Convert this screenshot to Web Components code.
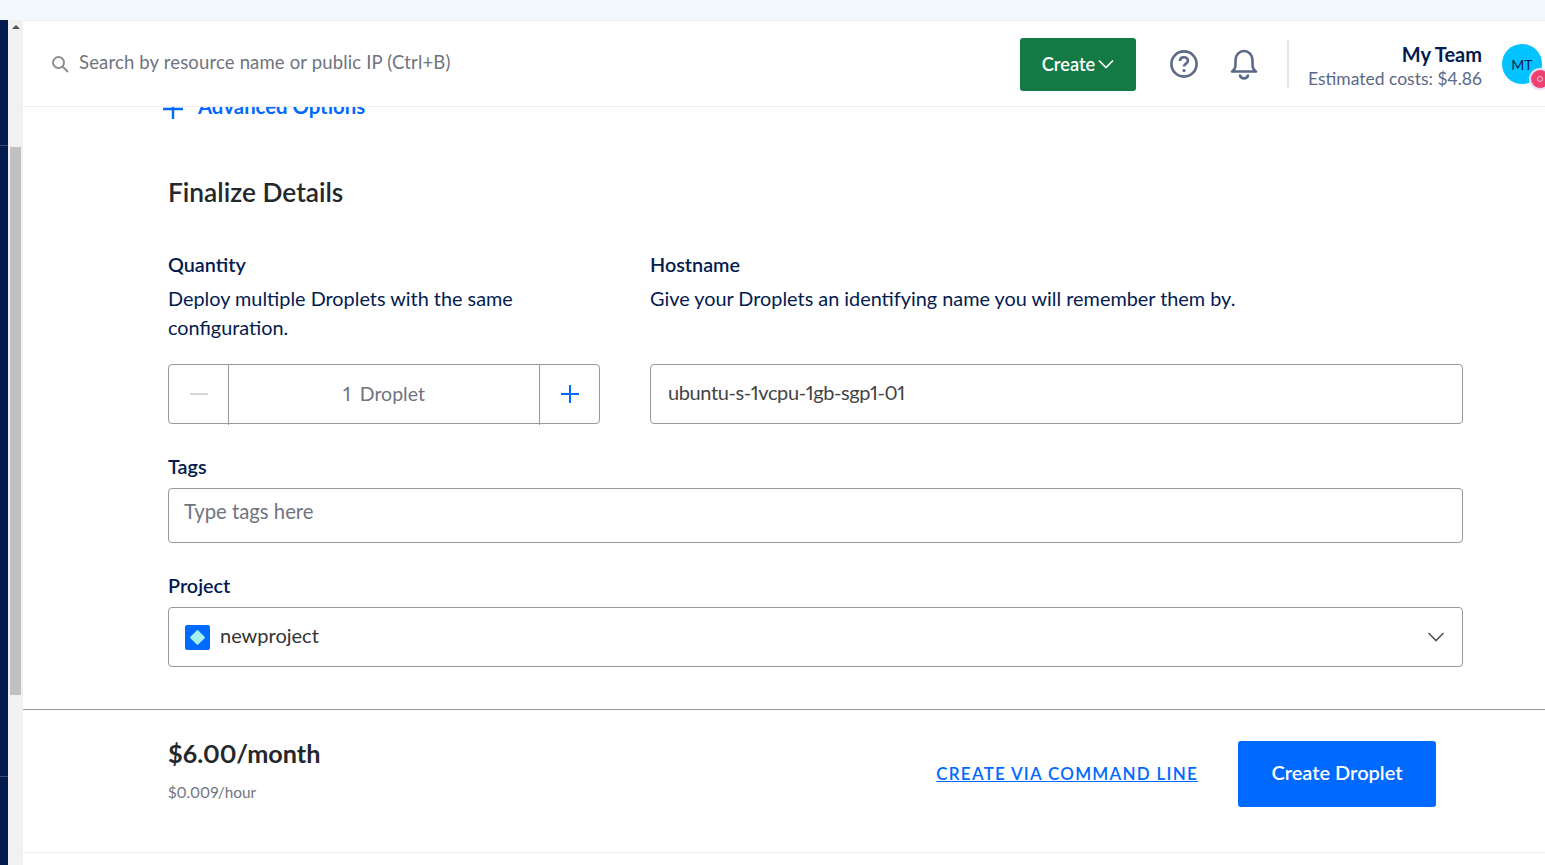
<!DOCTYPE html>
<html lang="en">
<head>
<meta charset="utf-8">
<title>Create Droplet</title>
<style>
    html, body { margin: 0; height: 100%; background: #fff; overflow: hidden; }
    body { font-family: 'Lato', 'Open Sans', sans-serif; color: #031b4e; font-variant-numeric: proportional-nums; }
</style>
</head>
<body>
<app-shell>
    <top-bar slot="header"></top-bar>
    <advanced-link></advanced-link>
    <section-title>Finalize Details</section-title>
    <details-form></details-form>
    <price-bar slot="footer"></price-bar>
</app-shell>

<script>
class AppShell extends HTMLElement {
    constructor() {
        super();
        this.attachShadow({ mode: 'open' });
        this.shadowRoot.innerHTML = `
            <style>
                :host { display: flex; flex-direction: column; width: 1545px; height: 865px; overflow: hidden; }
                .strip { height: 20px; flex: none; background: #f3f8ff; }
                .row { display: flex; flex: 1; min-height: 0; }
                .nav { width: 8px; flex: none; background: #031b4e; display: flex; flex-direction: column; }
                .nav i { display: block; height: 1px; background: #3a4b72; }
                .nav .a { height: 125px; }
                .nav .b { height: 630px; }
                .track { width: 15px; flex: none; background: #f1f1f1; display: flex; flex-direction: column; align-items: center; }
                .arrow { width: 0; height: 0; margin-top: 5px; border-left: 4px solid transparent; border-right: 4px solid transparent; border-bottom: 4px solid #505050; }
                .thumb { width: 11px; height: 548px; margin-top: 118px; background: #c1c1c1; }
                .main { flex: 1; min-width: 0; display: flex; flex-direction: column; }
                .body { padding: 0 82px 0 145px; }
            </style>
            <div class="strip"></div>
            <div class="row">
                <div class="nav"><div class="a"></div><i></i><div class="b"></div><i></i></div>
                <div class="track"><div class="arrow"></div><div class="thumb"></div></div>
                <div class="main">
                    <slot name="header"></slot>
                    <div class="body"><slot></slot></div>
                    <slot name="footer"></slot>
                </div>
            </div>
        `;
    }
}

class TopBar extends HTMLElement {
    constructor() {
        super();
        this.attachShadow({ mode: 'open' });
        this.shadowRoot.innerHTML = `
            <style>
                :host { display: flex; align-items: center; position: relative; z-index: 2; height: 85px; box-sizing: content-box;
                    background: #fff; border-top: 1px solid #e9ebef; border-bottom: 1px solid #eceef1; padding-left: 28px; }
                .search { display: flex; align-items: center; gap: 10px; flex: 1; font-size: 18.5px; letter-spacing: .16px; color: #6f7480; margin-top: -3px; }
                .search svg { margin-top: 4px; }
                .create { width: 116px; height: 53px; margin-top: 1px; box-sizing: border-box; background: #137a45; border-radius: 3px; color: #fff; font-size: 18.2px; font-weight: 600;
                    display: flex; align-items: center; justify-content: center; gap: 3px; }
                .icons { display: flex; align-items: center; gap: 30px; margin: 1px 28px 0 33px; }
                .sep { width: 2px; height: 48px; background: #e6e8ec; margin-top: 1px; }
                .team { display: flex; flex-direction: column; align-items: flex-end; padding-top: 5px; margin-left: 21px; width: 172px; white-space: nowrap; }
                .team b { display: block; font-size: 20px; line-height: 24px; margin-bottom: 1px; color: #031b4e; font-weight: 700; }
                .team span { display: block; font-size: 17.5px; line-height: 24px; color: #5b6987; }
                .avatar { position: relative; width: 40px; height: 40px; margin: 1px 3px 0 20px; border-radius: 50%; background: #00c3ff;
                    display: flex; align-items: center; justify-content: center; font-size: 14px; color: #031b4e; }
                .badge { position: absolute; left: 27px; top: 24px; width: 22px; height: 22px; box-sizing: border-box; border-radius: 50%; background: #f0406f; border: 2px solid #ecdcf7;
                    display: flex; align-items: center; justify-content: center; }
                .badge::after { content: ""; width: 4px; height: 4px; border-radius: 50%; border: 1.5px solid #f9c6dd; }
            </style>
            <div class="search">
                <svg width="18" height="18" viewBox="0 0 18 18" fill="none" stroke="#8e8e8e" stroke-width="2"><circle cx="7.5" cy="7.5" r="5.5"/><path d="M11.500 11.500L17 17"/></svg>
                <span>Search by resource name or public IP (Ctrl+B)</span>
            </div>
            <div class="create">Create
                <svg width="16" height="10" viewBox="0 0 16 10" fill="none" stroke="#fff" stroke-width="1.600"><path d="M1 1.500L8 8.500L15 1.500"/></svg>
            </div>
            <div class="icons">
                <svg width="30" height="30" viewBox="0 0 30 30" fill="none" stroke="#5b6987" stroke-width="2.600"><circle cx="15" cy="15" r="12.600"/><path d="M11 12c0-2.400 1.800-3.800 4-3.800s4 1.400 4 3.400c0 3-4 3-4 6" stroke-width="2.600"/><circle cx="15" cy="21.500" r="1.600" fill="#5b6987" stroke="none"/></svg>
                <svg width="30" height="32" viewBox="0 0 30 32" fill="none" stroke="#5b6987" stroke-width="2.600" stroke-linejoin="round"><path d="M3 23.500c2.500-1.500 3.500-3.500 3.500-7V12a8.500 9 0 0 1 17 0v4.500c0 3.500 1 5.500 3.500 7z"/><path d="M11 27.500a4.200 4.200 0 0 0 8 0" stroke-linecap="round"/></svg>
            </div>
            <div class="sep"></div>
            <div class="team"><b>My Team</b><span>Estimated costs: $4.86</span></div>
            <div class="avatar">MT<div class="badge"></div></div>
        `;
    }
}

class AdvancedLink extends HTMLElement {
    constructor() {
        super();
        this.attachShadow({ mode: 'open' });
        this.shadowRoot.innerHTML = `
            <style>
                :host { display: flex; align-items: center; gap: 15px; height: 24px; margin: -13px 0 0 -5px; font-size: 20.3px; font-weight: 700; color: #0069ff; }
                svg { margin-top: 6px; }
            </style>
            <svg width="20" height="20" viewBox="0 0 20 20" stroke="#0069ff" stroke-width="2.400"><path d="M10 0V20M0 10H20"/></svg>
            <span>Advanced Options</span>
        `;
    }
}

class SectionTitle extends HTMLElement {
    constructor() {
        super();
        this.attachShadow({ mode: 'open' });
        this.shadowRoot.innerHTML = `
            <style>
                :host { display: block; margin-top: 57px; font-size: 26.3px; line-height: 34px; font-weight: 600; color: #24272b; }
            </style>
            <slot></slot>
        `;
    }
}

class FormField extends HTMLElement {
    constructor() {
        super();
        this.attachShadow({ mode: 'open' });
        const label = this.getAttribute('label');
        const hint = this.getAttribute('hint');
        this.shadowRoot.innerHTML = `
            <style>
                :host { display: block; }
                h3 { margin: 0 0 var(--label-gap, 0); font-size: 19.8px; line-height: 29px; font-weight: 600; color: #031b4e; }
                p { margin: 5px 0 0; font-size: 19.85px; line-height: 29px; color: #031b4e; }
                .hint-box { min-height: var(--hint-height, 0); }
            </style>
            <h3>${label}</h3>
            ${hint ? `<div class="hint-box"><p>${hint}</p></div>` : ''}
            <slot></slot>
        `;
    }
}

class TextBox extends HTMLElement {
    constructor() {
        super();
        this.attachShadow({ mode: 'open' });
        this.shadowRoot.innerHTML = `
            <style>
                :host { display: flex; align-items: center; box-sizing: border-box; height: var(--box-height, 60px); border: 1px solid #999; border-radius: 4px;
                    padding: 0 var(--box-pad, 17px) var(--box-lift, 5px); font-size: var(--box-size, 20px); color: var(--box-color, #444); background: #fff; letter-spacing: var(--box-ls, -0.4px); }
            </style>
            <slot></slot>
        `;
    }
}

class QuantityStepper extends HTMLElement {
    constructor() {
        super();
        this.attachShadow({ mode: 'open' });
        this.shadowRoot.innerHTML = `
            <style>
                :host { display: flex; box-sizing: border-box; height: 60px; border: 1px solid #999; border-radius: 4px; font-size: 19.5px; color: #6f7480; }
                .btn { width: 59px; flex: none; display: flex; align-items: center; justify-content: center; }
                .mid { flex: 1; display: flex; align-items: center; justify-content: center; gap: 9px; margin-bottom: -1px; height: 60px;
                    border-left: 1px solid #999; border-right: 1px solid #999; padding-bottom: 4px; box-sizing: border-box; }
            </style>
            <div class="btn"><svg width="18" height="2"><rect width="18" height="2" fill="#d6d6d6"/></svg></div>
            <div class="mid"><span>1</span><span>Droplet</span></div>
            <div class="btn"><svg width="18" height="18" viewBox="0 0 18 18" stroke="#0069ff" stroke-width="2"><path d="M9 0V18M0 9H18"/></svg></div>
        `;
    }
}

class ProjectSelect extends HTMLElement {
    constructor() {
        super();
        this.attachShadow({ mode: 'open' });
        this.shadowRoot.innerHTML = `
            <style>
                :host { display: flex; align-items: center; box-sizing: border-box; height: 60px; border: 1px solid #999; border-radius: 4px; padding: 0 17px 0 16px;
                    font-size: 20px; color: #333; }
                .icon { display: flex; align-items: center; justify-content: center; width: 25px; height: 25px; border-radius: 2px; background: #0069ff; margin-right: 10px; }
                .icon i { display: block; width: 11px; height: 11px; background: #a5f3ec; border-radius: 1px; transform: rotate(45deg); }
                span { flex: 1; margin-top: -5px; }
            </style>
            <div class="icon"><i></i></div>
            <span>newproject</span>
            <svg width="18" height="10" viewBox="0 0 18 10" fill="none" stroke="#555" stroke-width="1.600"><path d="M1.500 1L9 8.500L16.500 1"/></svg>
        `;
    }
}

class DetailsForm extends HTMLElement {
    constructor() {
        super();
        this.attachShadow({ mode: 'open' });
        this.shadowRoot.innerHTML = `
            <style>
                :host { display: block; margin-top: 41px; }
                .top { display: grid; grid-template-columns: 432px 1fr; column-gap: 50px; }
                .top form-field { --hint-height: 80px; }
                .tags, .project { display: block; margin-top: 28px; --label-gap: 7px; }
                text-box.tag { --box-height: 55px; --box-pad: 15px; --box-color: #6f7480; --box-lift: 10px; --box-size: 20.3px; --box-ls: 0; }
            </style>
            <div class="top">
                <form-field label="Quantity" hint="Deploy multiple Droplets with the same configuration.">
                    <quantity-stepper></quantity-stepper>
                </form-field>
                <form-field label="Hostname" hint="Give your Droplets an identifying name you will remember them by.">
                    <text-box>ubuntu-s-1vcpu-1gb-sgp1-01</text-box>
                </form-field>
            </div>
            <form-field class="tags" label="Tags"><text-box class="tag">Type tags here</text-box></form-field>
            <form-field class="project" label="Project"><project-select></project-select></form-field>
        `;
    }
}

class PriceBar extends HTMLElement {
    constructor() {
        super();
        this.attachShadow({ mode: 'open' });
        this.shadowRoot.innerHTML = `
            <style>
                :host { display: flex; align-items: center; box-sizing: border-box; height: 144px; margin-top: 42px; padding: 0 109px 14px 145px;
                    border-top: 1px solid #999; border-bottom: 1px solid #eee; }
                .price { flex: 1; padding-bottom: 9px; }
                .month { font-size: 25.2px; line-height: 34px; font-weight: 700; color: #24272b; }
                .hour { margin-top: 11px; font-size: 15.3px; line-height: 22px; color: #6f7480; }
                a { font-size: 17px; font-weight: 600; letter-spacing: 1.26px; color: #0069ff; text-decoration: underline; margin: 0 40px 2px 0; }
                .go { box-sizing: border-box; width: 198px; height: 66px; padding-bottom: 4px; background: #0069ff; border-radius: 3px; color: #fff; font-size: 20px; font-weight: 600;
                    display: flex; align-items: center; justify-content: center; }
            </style>
            <div class="price">
                <div class="month">$6.00/month</div>
                <div class="hour">$0.009/hour</div>
            </div>
            <a>CREATE VIA COMMAND LINE</a>
            <div class="go">Create Droplet</div>
        `;
    }
}

customElements.define('app-shell', AppShell);
customElements.define('top-bar', TopBar);
customElements.define('advanced-link', AdvancedLink);
customElements.define('section-title', SectionTitle);
customElements.define('form-field', FormField);
customElements.define('text-box', TextBox);
customElements.define('quantity-stepper', QuantityStepper);
customElements.define('project-select', ProjectSelect);
customElements.define('details-form', DetailsForm);
customElements.define('price-bar', PriceBar);
</script>
</body>
</html>
